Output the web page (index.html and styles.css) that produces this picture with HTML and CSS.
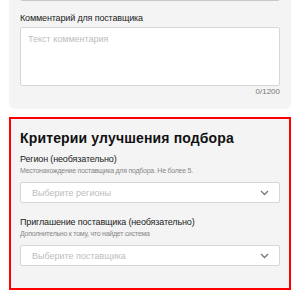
FILE: index.html
```html
<!DOCTYPE html>
<html lang="ru">
<head>
  <meta charset="UTF-8">
  <title>Заявка поставщику</title>
  <link rel="stylesheet" href="styles.css">
</head>
<body>

  <!-- Comment -->
  <section class="card card-top">
    <div class="input-stub"></div>
    <label class="label">Комментарий для поставщика</label>
    <div class="textarea">Текст комментария</div>
    <div class="counter">0/1200</div>
  </section>

  <!-- Criteria -->
  <section class="card card-criteria">
    <h3 class="title">Критерии улучшения подбора</h3>

    <label class="label">Регион (необязательно)</label>
    <div class="hint">Местонахождение поставщика для подбора. Не более 5.</div>
    <div class="select">
      <span>Выберите регионы</span>
      <svg class="chevron" width="9" height="6" viewBox="0 0 9 6"><path d="M1 1l3.5 3.5L8 1" fill="none" stroke="#777" stroke-width="1.3"/></svg>
    </div>

    <label class="label label-gap">Приглашение поставщика (необязательно)</label>
    <div class="hint">Дополнительно к тому, что найдет система</div>
    <div class="select">
      <span>Выберите поставщика</span>
      <svg class="chevron" width="9" height="6" viewBox="0 0 9 6"><path d="M1 1l3.5 3.5L8 1" fill="none" stroke="#777" stroke-width="1.3"/></svg>
    </div>
  </section>

</body>
</html>
```

FILE: styles.css
```css
body {
  margin: 0;
  padding: 0 9px;
  background: #fff;
  font-family: "Liberation Sans", Arial, sans-serif;
  color: #333;
}
.card {
  background: #f4f4f4;
  border-radius: 6px;
  box-sizing: border-box;
}
.card-top {
  margin-top: -30px;
  padding: 0 11px 12px;
}
.input-stub {
  height: 31px;
  box-sizing: border-box;
  background: #fff;
  border: 1px solid #c9c9c9;
  border-radius: 2px;
}
.label {
  display: block;
  font-size: 9px;
  line-height: 12px;
  color: #222;
  letter-spacing: -0.15px;
}
.card-top .label {
  margin-top: 11px;
}
.textarea {
  margin-top: 3px;
  height: 59px;
  box-sizing: border-box;
  background: #fff;
  border: 1px solid #d6d6d6;
  border-radius: 2px;
  padding: 5px 7px;
  font-size: 9px;
  line-height: 12px;
  color: #bdbdbd;
}
.counter {
  margin-top: 1px;
  text-align: right;
  font-size: 8px;
  line-height: 10px;
  color: #777;
}
.card-criteria {
  margin-top: 8px;
  border: 2px solid #f00;
  border-radius: 0;
  padding: 10px 9px 22px;
}
.title {
  margin: 0 0 6px;
  font-size: 14px;
  line-height: 18px;
  font-weight: bold;
  color: #111;
  letter-spacing: 0.15px;
}
.hint {
  font-size: 7px;
  line-height: 12px;
  color: #888;
  letter-spacing: -0.25px;
}
.select {
  margin-top: 5px;
  height: 21px;
  box-sizing: border-box;
  background: #fff;
  border: 1px solid #d6d6d6;
  border-radius: 2px;
  padding: 0 10px 0 11px;
  display: flex;
  align-items: center;
  justify-content: space-between;
  font-size: 9px;
  color: #bdbdbd;
}
.label-gap {
  margin-top: 13px;
}
```
